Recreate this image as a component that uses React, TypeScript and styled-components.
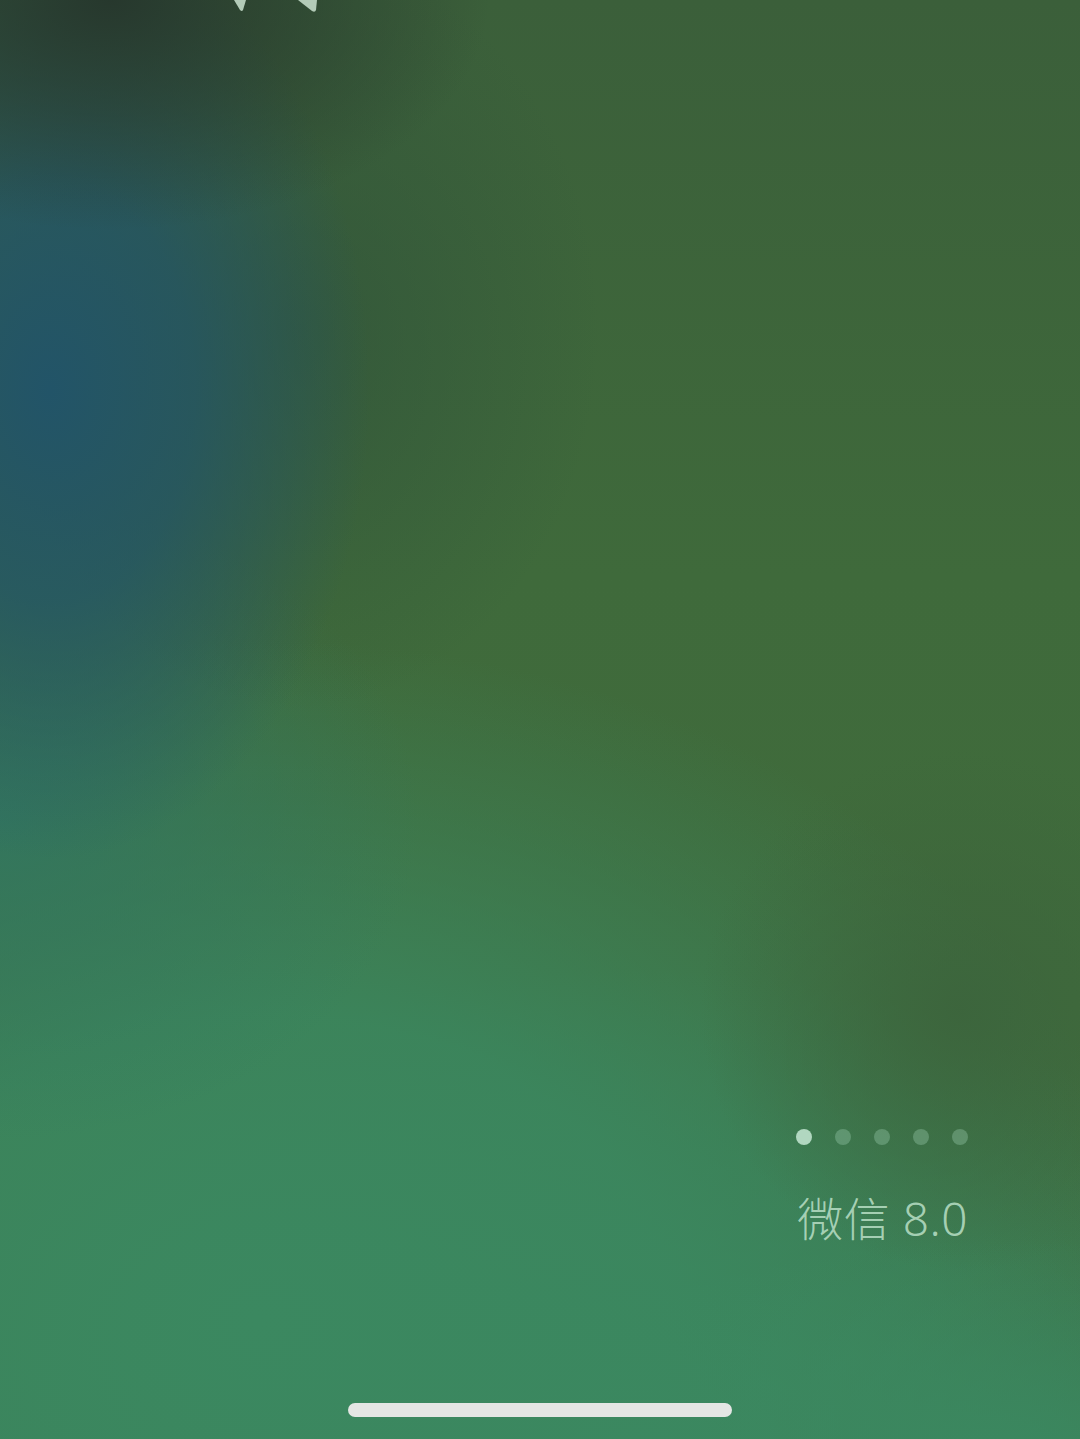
import React from "react";
import styled, { createGlobalStyle } from "styled-components";

const Global = createGlobalStyle`
  html, body { margin: 0; padding: 0; }
  body { font-family: "Noto Sans", "Noto Sans CJK SC", sans-serif; background: #3b8660; }
`;

const Screen = styled.div`
  position: relative;
  width: 1080px;
  height: 1439px;
  overflow: hidden;
  display: flex;
  flex-direction: column;
  background:
    radial-gradient(ellipse 380px 230px at 110px 0px, rgba(38,54,44,0.95), rgba(38,54,44,0.5) 50%, rgba(38,54,44,0) 100%),
    radial-gradient(ellipse 320px 470px at 50px 390px, rgba(34,84,104,1), rgba(34,84,104,0.75) 45%, rgba(34,84,104,0) 100%),
    radial-gradient(ellipse 300px 380px at 300px 330px, rgba(44,78,58,0.55), rgba(44,78,58,0) 100%),
    radial-gradient(ellipse 420px 320px at 0px 820px, rgba(50,118,96,0.9), rgba(50,118,96,0) 100%),
    radial-gradient(ellipse 260px 260px at 960px 1010px, rgba(60,100,60,0.9), rgba(60,100,60,0) 100%),
    radial-gradient(ellipse 500px 220px at 1000px 1460px, rgba(59,136,96,1), rgba(59,136,96,0) 100%),
    radial-gradient(ellipse 900px 680px at 260px 1320px, rgba(59,136,96,1), rgba(59,136,96,0.85) 45%, rgba(59,136,96,0) 100%),
    radial-gradient(ellipse 700px 480px at 640px 1450px, rgba(59,136,96,1), rgba(59,136,96,0) 100%),
    linear-gradient(180deg, #3b5f3a 0%, #3f6a3b 40%, #406c3c 70%, #3d7048 100%);
`;

const TopMark = styled.svg`
  display: block;
  margin-left: 230px;
  flex: none;
`;

const Spacer = styled.div`
  flex: 1;
`;

const Pager = styled.div`
  align-self: flex-end;
  margin-right: 112px;
  display: flex;
  flex-direction: column;
  align-items: flex-end;
`;

const Dots = styled.div`
  display: flex;
  gap: 23px;
`;

const Dot = styled.span<{ $active?: boolean }>`
  width: 16px;
  height: 16px;
  border-radius: 50%;
  background: ${(p) => (p.$active ? "rgba(190,225,204,0.9)" : "rgba(160,210,180,0.35)")};
`;

const Version = styled.div`
  margin-top: 43px;
  font-size: 46px;
  font-weight: 300;
  line-height: 60px;
  color: rgba(176, 216, 190, 0.92);
  letter-spacing: 0.5px;
  white-space: nowrap;
`;

const HomeBar = styled.div`
  align-self: center;
  margin-top: 155px;
  margin-bottom: 22px;
  width: 384px;
  height: 14px;
  border-radius: 7px;
  background: #e4e6e4;
`;

export default function App() {
  return (
    <>
      <Global />
      <Screen>
        <TopMark width="100" height="16" viewBox="0 0 100 16">
          <path d="M4 0 L16 0 L13 10 Q12 12 10 10 Z" fill="#b3cbb8" />
          <path d="M68 0 L87 0 L86 10 Q85 13 82 11 Z" fill="#b3cbb8" />
        </TopMark>
        <Spacer />
        <Pager>
          <Dots>
            {[0, 1, 2, 3, 4].map((i) => (
              <Dot key={i} $active={i === 0} />
            ))}
          </Dots>
          <Version>微信 8.0</Version>
        </Pager>
        <HomeBar />
      </Screen>
    </>
  );
}
